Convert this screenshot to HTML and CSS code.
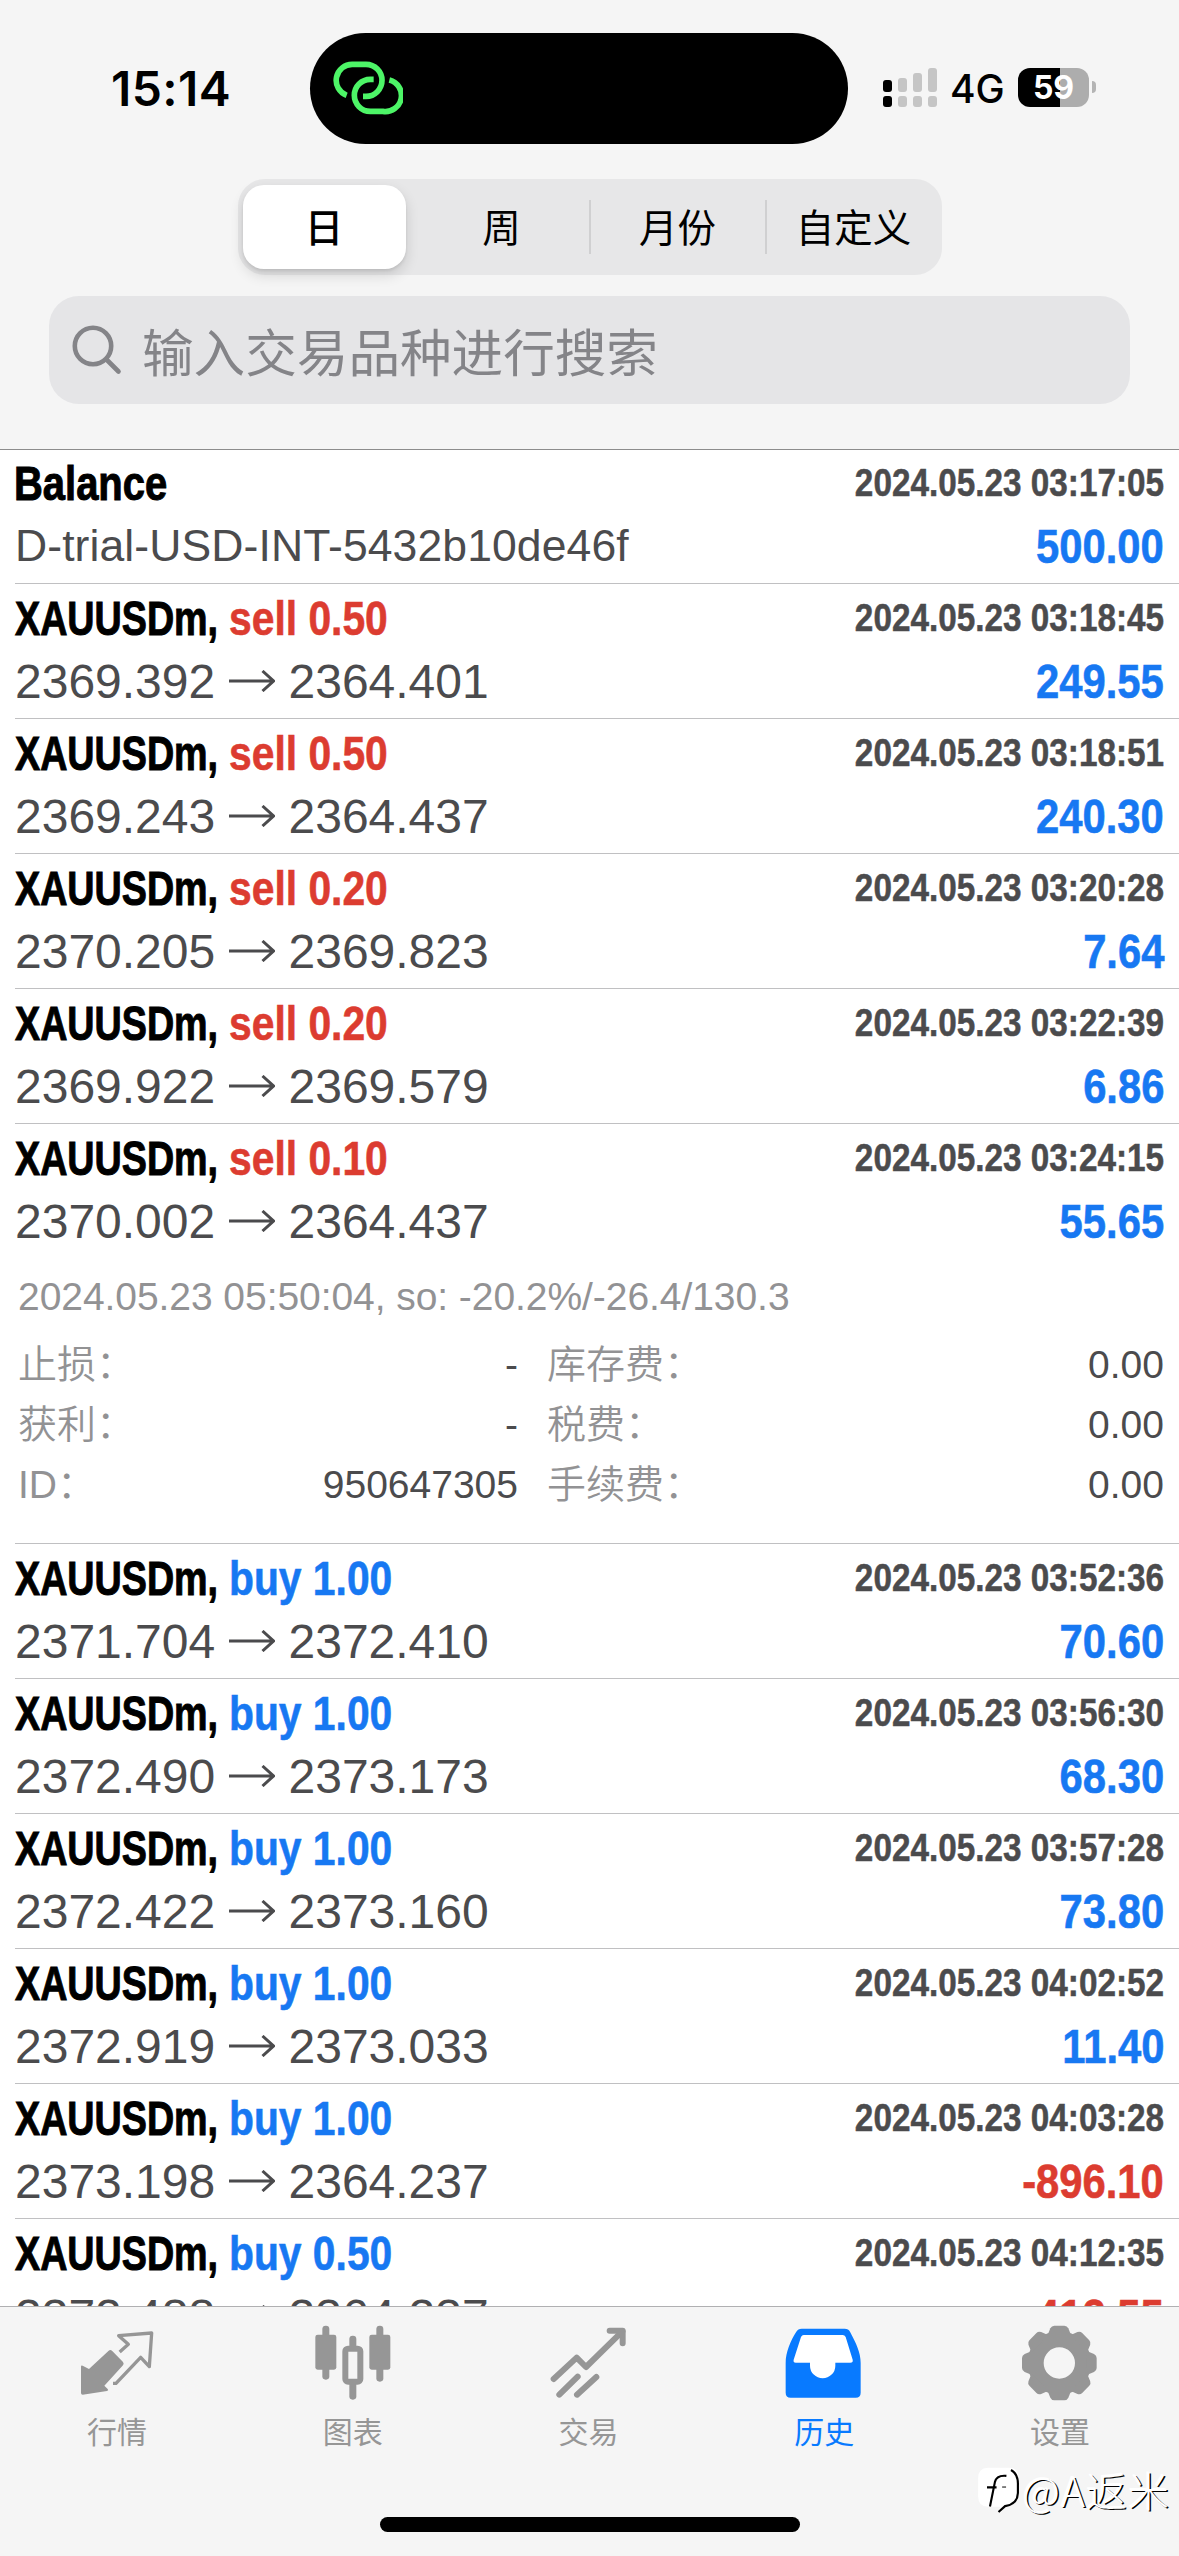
FILE: index.html
```html
<!DOCTYPE html>
<html lang="zh-CN">
<head>
<meta charset="utf-8">
<title>历史</title>
<link rel="stylesheet" href="styles.css">
</head>
<body>
<div class="screen">
  <header class="header">
    <div class="status">
      <div class="clock">15:14</div>
      <div class="island">
        <svg class="link-icon" viewBox="100 95 210 165" fill="none" stroke="#4df567" stroke-width="17">
          <path d="M141 198A48 48 0 0 1 159 105H199A48 48 0 0 1 199 201H190"/>
          <path d="M222 150H212A48 48 0 0 0 212 246H250A48 48 0 0 0 269 152"/>
        </svg>
      </div>
      <div class="indicators">
        <svg class="signal" viewBox="0 0 54 39" fill="#c5c5c5">
          <rect x="0" y="12" width="9" height="12" rx="3" fill="#000"/>
          <rect x="0" y="28" width="9" height="11" rx="3" fill="#000"/>
          <rect x="15" y="10" width="9" height="14" rx="3"/>
          <rect x="15" y="28" width="9" height="11" rx="3"/>
          <rect x="30" y="5" width="9" height="19" rx="3"/>
          <rect x="30" y="28" width="9" height="11" rx="3"/>
          <rect x="45" y="0" width="9" height="24" rx="3"/>
          <rect x="45" y="28" width="9" height="11" rx="3"/>
        </svg>
        <span class="network">4G</span>
        <span class="battery">59</span>
        <span class="battery-tip"></span>
      </div>
    </div>
    <div class="segments">
      <div class="segment selected">日</div>
      <div class="segment">周</div>
      <div class="segment divided">月份</div>
      <div class="segment divided">自定义</div>
    </div>
    <div class="search">
      <svg class="search-icon" viewBox="0 0 50 50" fill="none" stroke="#848488" stroke-width="4.6" stroke-linecap="round">
        <circle cx="21" cy="21" r="18.2"/>
        <path d="M34.5 34.5L46.5 46.500"/>
      </svg>
      <span class="placeholder">输入交易品种进行搜索</span>
    </div>
  </header>

  <main class="list">
    <section class="row">
      <div class="line"><span class="name balance">Balance</span><span class="date">2024.05.23 03:17:05</span></div>
      <div class="line second"><span class="comment-id">D-trial-USD-INT-5432b10de46f</span><span class="amount">500.00</span></div>
    </section>
    <section class="row">
      <div class="line"><span class="name">XAUUSDm,</span><span class="side sell">sell 0.50</span><span class="date">2024.05.23 03:18:45</span></div>
      <div class="line second"><span class="price">2369.392</span><svg class="arrow" viewBox="0 0 46 22"><path d="M0 11H44M33.500 1L44.500 11L33.500 21"/></svg><span class="price">2364.401</span><span class="amount">249.55</span></div>
    </section>
    <section class="row">
      <div class="line"><span class="name">XAUUSDm,</span><span class="side sell">sell 0.50</span><span class="date">2024.05.23 03:18:51</span></div>
      <div class="line second"><span class="price">2369.243</span><svg class="arrow" viewBox="0 0 46 22"><path d="M0 11H44M33.500 1L44.500 11L33.500 21"/></svg><span class="price">2364.437</span><span class="amount">240.30</span></div>
    </section>
    <section class="row">
      <div class="line"><span class="name">XAUUSDm,</span><span class="side sell">sell 0.20</span><span class="date">2024.05.23 03:20:28</span></div>
      <div class="line second"><span class="price">2370.205</span><svg class="arrow" viewBox="0 0 46 22"><path d="M0 11H44M33.500 1L44.500 11L33.500 21"/></svg><span class="price">2369.823</span><span class="amount">7.64</span></div>
    </section>
    <section class="row">
      <div class="line"><span class="name">XAUUSDm,</span><span class="side sell">sell 0.20</span><span class="date">2024.05.23 03:22:39</span></div>
      <div class="line second"><span class="price">2369.922</span><svg class="arrow" viewBox="0 0 46 22"><path d="M0 11H44M33.500 1L44.500 11L33.500 21"/></svg><span class="price">2369.579</span><span class="amount">6.86</span></div>
    </section>
    <section class="row expanded">
      <div class="line"><span class="name">XAUUSDm,</span><span class="side sell">sell 0.10</span><span class="date">2024.05.23 03:24:15</span></div>
      <div class="line second"><span class="price">2370.002</span><svg class="arrow" viewBox="0 0 46 22"><path d="M0 11H44M33.500 1L44.500 11L33.500 21"/></svg><span class="price">2364.437</span><span class="amount">55.65</span></div>
      <div class="close-info">2024.05.23 05:50:04, so: -20.2%/-26.4/130.3</div>
      <div class="details">
        <div class="detail"><span class="label">止损：</span><span>-</span></div>
        <div class="detail"><span class="label">库存费：</span><span>0.00</span></div>
        <div class="detail"><span class="label">获利：</span><span>-</span></div>
        <div class="detail"><span class="label">税费：</span><span>0.00</span></div>
        <div class="detail"><span class="label">ID：</span><span>950647305</span></div>
        <div class="detail"><span class="label">手续费：</span><span>0.00</span></div>
      </div>
    </section>
    <section class="row">
      <div class="line"><span class="name">XAUUSDm,</span><span class="side buy">buy 1.00</span><span class="date">2024.05.23 03:52:36</span></div>
      <div class="line second"><span class="price">2371.704</span><svg class="arrow" viewBox="0 0 46 22"><path d="M0 11H44M33.500 1L44.500 11L33.500 21"/></svg><span class="price">2372.410</span><span class="amount">70.60</span></div>
    </section>
    <section class="row">
      <div class="line"><span class="name">XAUUSDm,</span><span class="side buy">buy 1.00</span><span class="date">2024.05.23 03:56:30</span></div>
      <div class="line second"><span class="price">2372.490</span><svg class="arrow" viewBox="0 0 46 22"><path d="M0 11H44M33.500 1L44.500 11L33.500 21"/></svg><span class="price">2373.173</span><span class="amount">68.30</span></div>
    </section>
    <section class="row">
      <div class="line"><span class="name">XAUUSDm,</span><span class="side buy">buy 1.00</span><span class="date">2024.05.23 03:57:28</span></div>
      <div class="line second"><span class="price">2372.422</span><svg class="arrow" viewBox="0 0 46 22"><path d="M0 11H44M33.500 1L44.500 11L33.500 21"/></svg><span class="price">2373.160</span><span class="amount">73.80</span></div>
    </section>
    <section class="row">
      <div class="line"><span class="name">XAUUSDm,</span><span class="side buy">buy 1.00</span><span class="date">2024.05.23 04:02:52</span></div>
      <div class="line second"><span class="price">2372.919</span><svg class="arrow" viewBox="0 0 46 22"><path d="M0 11H44M33.500 1L44.500 11L33.500 21"/></svg><span class="price">2373.033</span><span class="amount">11.40</span></div>
    </section>
    <section class="row">
      <div class="line"><span class="name">XAUUSDm,</span><span class="side buy">buy 1.00</span><span class="date">2024.05.23 04:03:28</span></div>
      <div class="line second"><span class="price">2373.198</span><svg class="arrow" viewBox="0 0 46 22"><path d="M0 11H44M33.500 1L44.500 11L33.500 21"/></svg><span class="price">2364.237</span><span class="amount loss">-896.10</span></div>
    </section>
    <section class="row">
      <div class="line"><span class="name">XAUUSDm,</span><span class="side buy">buy 0.50</span><span class="date">2024.05.23 04:12:35</span></div>
      <div class="line second"><span class="price">2372.488</span><svg class="arrow" viewBox="0 0 46 22"><path d="M0 11H44M33.500 1L44.500 11L33.500 21"/></svg><span class="price">2364.237</span><span class="amount loss">-412.55</span></div>
    </section>
  </main>

  <nav class="tabbar">
    <div class="tabs">
      <div class="tab">
        <svg viewBox="114 130 240 240" fill="#969696">
          <path d="M128 258Q123 256 123 261V340Q123 345 128 345L201 334Q207 332 203 328L193 318L249 257Q253 252 249 247L216 213Q211 209 206 213L147 268Z"/>
          <path d="M239 217L265 194L236 168L335 160L328 261L302 233L228 311H219" fill="none" stroke="#969696" stroke-width="10" stroke-linejoin="round"/>
        </svg>
        <span>行情</span>
      </div>
      <div class="tab">
        <svg viewBox="821 130 240 240" fill="#969696">
          <rect x="825" y="165" width="63" height="105" rx="7"/>
          <rect x="846" y="138" width="21" height="162" rx="10"/>
          <rect x="987" y="165" width="63" height="105" rx="7"/>
          <rect x="1008" y="138" width="21" height="168" rx="10"/>
          <rect x="927" y="168" width="21" height="40" rx="10"/>
          <rect x="927" y="305" width="21" height="55" rx="10"/>
          <rect x="915" y="207" width="45" height="99" rx="8" fill="none" stroke="#969696" stroke-width="18"/>
        </svg>
        <span>图表</span>
      </div>
      <div class="tab">
        <svg viewBox="88 130 240 240" fill="none" stroke="#969696" stroke-width="18" stroke-linecap="round" stroke-linejoin="round">
          <path d="M102 298L171 234L199 262L308 155"/>
          <path d="M270 153H309V191"/>
          <path d="M119 345L174 291M172 345L230 292"/>
        </svg>
        <span>交易</span>
      </div>
      <div class="tab active">
        <svg viewBox="796 130 240 240" fill="#087aff">
          <path d="M846 152H975L1010 249H812Z" fill="#fff"/>
          <circle cx="909" cy="258" r="39" fill="#fff"/>
          <path fill-rule="evenodd" d="M846 147H975Q987 147 991 156C1009 190 1023 218 1023 250V339Q1023 354 1008 354H813Q798 354 798 339V250C798 218 812 184 830 156Q835 147 846 147ZM852 166Q847 166 844 172L822 240Q820 249 828 249H871V258A38 38 0 0 0 947 258V249H992Q1001 249 999 240L978 172Q975 166 969 166Z"/>
        </svg>
        <span>历史</span>
      </div>
      <div class="tab">
        <svg viewBox="243 130 240 240" fill="#969696">
          <defs><path id="tooth" d="M331 146Q335 138 343 138H373Q381 138 385 146L394 168H322Z"/></defs>
          <circle cx="358" cy="250" r="71" fill="none" stroke="#969696" stroke-width="48"/>
          <use href="#tooth"/>
          <use href="#tooth" transform="rotate(45 358 250)"/>
          <use href="#tooth" transform="rotate(90 358 250)"/>
          <use href="#tooth" transform="rotate(135 358 250)"/>
          <use href="#tooth" transform="rotate(180 358 250)"/>
          <use href="#tooth" transform="rotate(225 358 250)"/>
          <use href="#tooth" transform="rotate(270 358 250)"/>
          <use href="#tooth" transform="rotate(315 358 250)"/>
        </svg>
        <span>设置</span>
      </div>
    </div>
    <div class="home-indicator"></div>
    <div class="watermark">
      <svg viewBox="90 568 130 146">
        <path d="M120 573H185Q213 573 213 605V650Q213 688 172 692L152 708L157 692H120Q90 692 90 660V605Q90 573 120 573Z" fill="#fff"/>
        <path d="M190 580Q212 592 211 625V650Q210 684 172 690L152 708M126 691L141 617Q146 595 176 598M117 633H146" fill="none" stroke="#000" stroke-width="6.500"/>
        <path d="M163 632H175" stroke="#000" stroke-width="3"/>
      </svg>
      <span>@A返米</span>
    </div>
  </nav>
</div>
</body>
</html>
```
FILE: styles.css
```css
* { box-sizing: border-box; }

body {
  margin: 0;
  background: #fff;
  color: #4b4b4d;
  font-family: "Liberation Sans", "Noto Sans CJK SC", sans-serif;
}

.screen {
  width: 1179px;
  height: 2556px;
  display: flex;
  flex-direction: column;
  overflow: hidden;
}

/* Header */
.header {
  flex: none;
  height: 449px;
  padding: 33px 49px 0;
  background: #f5f5f5;
  box-shadow: 0 1px 0 #8c8c8c;
  z-index: 1;
  display: flex;
  flex-direction: column;
  align-items: center;
}

.status {
  align-self: stretch;
  height: 111px;
  display: grid;
  grid-template-columns: 261px 538px 1fr;
  font-family: Inter, sans-serif;
  color: #000;
}

.clock {
  padding-left: 62px;
  font-size: 48px;
  font-weight: 600;
  line-height: 111px;
  letter-spacing: 0.4px;
}

.island {
  background: #000;
  border-radius: 56px;
  padding: 28px 0 0 23px;
}

.link-icon {
  display: block;
  width: 70px;
  height: 55px;
}

.indicators {
  padding: 35px 0 0 35px;
  display: flex;
  align-items: flex-start;
  height: 74px;
}

.signal {
  width: 54px;
  height: 39px;
  flex: none;
}

.network {
  width: 67px;
  padding-left: 13px;
  font-size: 39px;
  font-weight: 500;
  line-height: 42px;
}

.battery {
  margin-left: 14px;
  width: 71px;
  height: 39px;
  border-radius: 12px;
  background: linear-gradient(90deg, #000 42px, #adadad 42px);
  color: #fff;
  font-size: 32px;
  font-weight: 700;
  line-height: 40px;
  text-align: center;
}

.battery-tip {
  width: 4px;
  height: 12px;
  margin: 13px 0 0 3px;
  border-radius: 0 5px 5px 0;
  background: #b4b4b4;
}

.segments {
  width: 704px;
  height: 96px;
  margin-top: 35px;
  border-radius: 27px;
  background: #e7e7e8;
  display: grid;
  grid-template-columns: repeat(4, 1fr);
  align-items: center;
}

.segment {
  height: 54px;
  text-align: center;
  font: 400 38.5px/51px "Noto Sans CJK SC", sans-serif;
  color: #000;
}

.segment.divided {
  position: relative;
  left: -1px;
  border-left: 2px solid #d0d0d1;
}

.segment.selected {
  height: 84px;
  margin: 0 8px 0 5px;
  border-radius: 21px;
  background: #fff;
  line-height: 81px;
  font-weight: 500;
  box-shadow: 0 6px 14px rgba(0, 0, 0, 0.14), 0 2px 3px rgba(0, 0, 0, 0.08);
}

.search {
  align-self: stretch;
  height: 108px;
  margin-top: 21px;
  padding-left: 23px;
  border-radius: 30px;
  background: #e5e5e7;
  display: flex;
  align-items: center;
  gap: 20px;
}

.search-icon {
  width: 50px;
  height: 50px;
}

.placeholder {
  font: 400 51.6px/106px "Noto Sans CJK SC", sans-serif;
  color: #848488;
}

/* Deal list */
.list {
  flex: none;
  height: 1857px;
  overflow: hidden;
}

.row {
  height: 135px;
  margin-left: 15px;
  padding-right: 15px;
  border-bottom: 1px solid #c0c0c2;
}

.row.expanded { height: 420px; }

.line {
  display: flex;
  align-items: flex-start;
  height: 69px;
  white-space: nowrap;
}

.line.second { height: 57px; }

.name,
.side,
.amount {
  font-size: 48px;
  font-weight: 700;
  line-height: 69px;
  -webkit-text-stroke: 0.6px currentColor;
}

.name {
  width: 214px;
  color: #000;
  -webkit-text-stroke-width: 1px;
  transform: scaleX(0.785);
  transform-origin: left;
}

.name.balance { transform: translateX(-1px) scaleX(0.832); }

.side {
  transform: scaleX(0.85);
  transform-origin: left;
}

.sell, .loss { color: #dc3c30; }
.buy { color: #1778f2; }

.date {
  margin-left: auto;
  font-size: 39px;
  font-weight: 700;
  line-height: 67px;
  -webkit-text-stroke: 0.5px currentColor;
  transform: scaleX(0.854);
  transform-origin: right;
}

.price {
  width: 214px;
  font-size: 48px;
  line-height: 57px;
}

.arrow {
  width: 46px;
  height: 22px;
  margin: 17px 13.5px 0 0;
  fill: none;
  stroke: #4b4b4d;
  stroke-width: 3;
}

.comment-id {
  font-size: 44.5px;
  line-height: 55px;
  letter-spacing: 0.1px;
}

.amount {
  margin-left: auto;
  line-height: 57px;
  transform: scaleX(0.87);
  transform-origin: right;
}

.amount:not(.loss) { color: #1778f2; }

.close-info {
  margin: 27px 0 18px 3px;
  font-size: 39px;
  line-height: 40px;
  letter-spacing: -0.06px;
  color: #929294;
  white-space: nowrap;
}

.details {
  margin-left: 3px;
  display: grid;
  grid-template-columns: 500px 617px;
  column-gap: 29px;
}

.detail {
  display: flex;
  justify-content: space-between;
  font-size: 39px;
  line-height: 60px;
}

.label {
  color: #929294;
  font-weight: 350;
}

/* Tab bar */
.tabbar {
  flex: none;
  position: relative;
  height: 250px;
  border-top: 1px solid #b0b0b2;
  background: #f5f5f5;
}

.tabs {
  display: grid;
  grid-template-columns: repeat(5, 1fr);
  padding-top: 16px;
}

.tab {
  display: flex;
  flex-direction: column;
  align-items: center;
  gap: 10px;
  font-size: 30px;
  font-weight: 400;
  line-height: 40px;
  color: #969696;
}

.tab span { margin-left: -2px; }

.tab.active { color: #087aff; }

.tab svg {
  width: 80px;
  height: 80px;
}

.home-indicator {
  width: 420px;
  height: 15px;
  margin: 64px auto 0;
  border-radius: 8px;
  background: #000;
}

/* Floats over the bottom-right corner of the tab bar */
.watermark {
  position: absolute;
  right: 9px;
  bottom: 36px;
  display: flex;
  align-items: center;
  gap: 2px;
  color: #fff;
  font: 300 41px/62px "Noto Sans CJK SC", sans-serif;
  letter-spacing: 1px;
  text-shadow: 1.5px 1px 0 #000, -1px -1px 0 #fff;
}

.watermark span { margin-top: -2px; }

.watermark svg {
  width: 43px;
  height: 48px;
}
```
